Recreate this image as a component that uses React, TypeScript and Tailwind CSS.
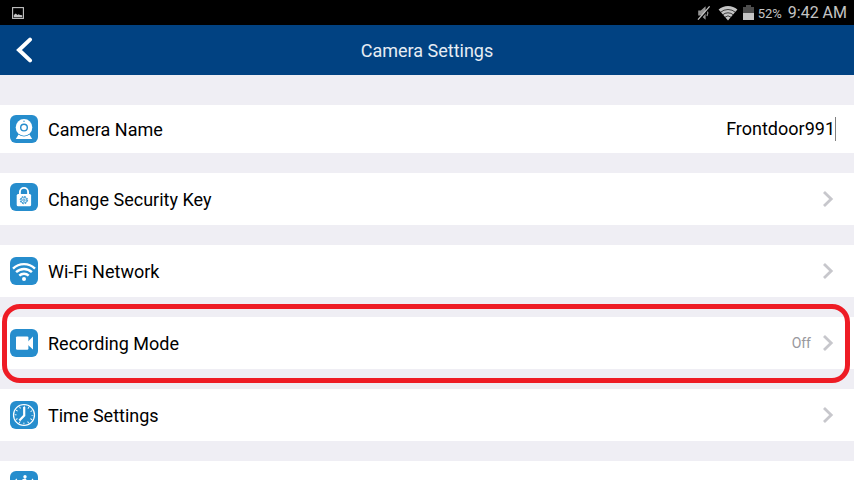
import type { ReactNode } from "react";
import clsx from "clsx";

function IconTile({ children, className }: { children: ReactNode; className?: string }) {
    return (
        <svg viewBox="0 0 28 28" className={clsx("h-7 w-7 shrink-0 rounded-md bg-[#268dcd]", className)} fill="none" aria-hidden="true">
            {children}
        </svg>
    );
}

function WebcamIcon() {
    return (
        <IconTile>
            <path d="M8.5 19.5h11l2.7 4.5H5.8z" fill="#fff" />
            <circle cx="14" cy="12.4" r="9" fill="#268dcd" />
            <circle cx="14" cy="12.4" r="8.3" fill="#fff" />
            <circle cx="14" cy="12.6" r="3.3" stroke="#268dcd" strokeWidth="1.4" />
            <circle cx="14" cy="6.2" r="0.7" fill="#268dcd" />
        </IconTile>
    );
}

function LockIcon() {
    return (
        <IconTile className="mt-[10px] self-start">
            <path d="M9.9 12V9a4.1 4.1 0 0 1 8.2 0v3" stroke="#fff" strokeWidth="1.9" />
            <rect x="6.7" y="11" width="14.4" height="12.3" rx="1.5" fill="#fff" />
            <circle cx="13.9" cy="17.1" r="3.7" stroke="#268dcd" strokeWidth="1" strokeDasharray="1.6 1.3" />
            <circle cx="13.9" cy="17.1" r="2.9" stroke="#268dcd" strokeWidth="0.8" />
            <circle cx="13.9" cy="17.1" r="1.2" stroke="#268dcd" strokeWidth="0.9" />
        </IconTile>
    );
}

function WifiIcon() {
    return (
        <IconTile>
            <g stroke="#fff" strokeWidth="2.4">
                <path d="M3 11.6a15.8 15.8 0 0 1 22 0" />
                <path d="M6.1 15.2a11.4 11.4 0 0 1 15.8 0" />
                <path d="M9.3 18.7a6.8 6.8 0 0 1 9.4 0" />
            </g>
            <circle cx="14" cy="21.9" r="2" fill="#fff" />
        </IconTile>
    );
}

function VideoIcon() {
    return (
        <IconTile>
            <rect x="6" y="7.4" width="12.4" height="13.4" rx="1.2" fill="#fff" />
            <path d="M18 12.4 23 7.6v13l-5-4.6z" fill="#fff" />
        </IconTile>
    );
}

function ClockIcon() {
    return (
        <IconTile>
            <circle cx="14" cy="14" r="10.5" stroke="#fff" strokeWidth="1.2" />
            <circle cx="14" cy="14" r="8.4" stroke="#fff" strokeWidth="2" strokeDasharray="0.9 3.498" strokeDashoffset="0.45" />
            <path d="M14.2 6v8.6l-4.8 5" stroke="#fff" strokeWidth="2.2" />
        </IconTile>
    );
}

function MotionIcon() {
    return (
        <IconTile className="mt-[10px] self-start">
            <circle cx="15" cy="5.7" r="1.7" fill="#fff" />
            <path d="M12.4 9.2 15 8.2l2 2.4M14.4 8.8l-1 6 3 3.2M13.4 15l-2.8 5" stroke="#fff" strokeWidth="1.7" />
            <path d="M6.8 8a9.2 9.2 0 0 0 0 12.6M22 8a9.2 9.2 0 0 1 0 12.6" stroke="#fff" strokeWidth="1.2" />
        </IconTile>
    );
}

function Chevron() {
    return (
        <svg viewBox="0 0 12 18" className="h-[18px] w-3 shrink-0" fill="none" stroke="#c7c7cc" strokeWidth="2.8" aria-hidden="true">
            <path d="M2 2l7.2 7L2 16" />
        </svg>
    );
}

const rows = [
    { id: "security", label: "Change Security Key", icon: <LockIcon /> },
    { id: "wifi", label: "Wi-Fi Network", icon: <WifiIcon /> },
    { id: "recording", label: "Recording Mode", icon: <VideoIcon />, value: "Off", highlighted: true },
    { id: "time", label: "Time Settings", icon: <ClockIcon /> },
    { id: "motion", label: "", icon: <MotionIcon /> },
];

function StatusBar() {
    return (
        <div className="flex h-[25px] shrink-0 items-center bg-black pr-[7px] pl-3 text-[#c4c4c4]">
            <svg viewBox="0 0 12 12" className="mt-px h-3 w-3" fill="none" aria-hidden="true">
                <rect x="0.6" y="0.6" width="10.8" height="10.8" stroke="currentColor" strokeWidth="1.1" />
                <path d="M1.8 10.2V8l2-1.6L5.4 8l1.2-.8 1.4.8 2.2.2v2z" fill="currentColor" />
            </svg>
            <div className="ml-auto flex items-center">
                <svg viewBox="0 0 14 16" className="mr-[7px] h-4 w-[14px]" fill="none" aria-hidden="true">
                    <path d="M1.2 5.5h2.6L8.6 1.3v13.4L3.8 10.5H1.2z" fill="#959595" />
                    <path d="M10 5q1.6 3 0 6" stroke="#959595" strokeWidth="1.3" />
                    <path d="M2 15.4 13.4 2.2" stroke="#000" strokeWidth="1.4" />
                    <path d="M1 14.6 12.6 1.4" stroke="currentColor" strokeWidth="1.3" />
                </svg>
                <svg viewBox="0 0 20 16" className="mr-[5px] h-4 w-5" fill="none" aria-hidden="true">
                    <path d="M.6 4.6a14 14 0 0 1 18.8 0L10 15.6z" fill="currentColor" />
                    <path d="M2.4 7.4a11.4 11.4 0 0 1 15.2 0M4.6 9.9a8 8 0 0 1 10.8 0M6.8 12.3a4.7 4.7 0 0 1 6.4 0" stroke="#000" strokeWidth="0.7" />
                </svg>
                <svg viewBox="0 0 11 16" className="mr-1 h-4 w-[11px]" aria-hidden="true">
                    <path d="M3 0h5v2h3v6H0V2h3z" fill="#4d4d4d" />
                    <path d="M0 8h11v7H0z" fill="currentColor" />
                </svg>
                <span className="mt-[2px] mr-[6px] text-[13px] leading-4">52%</span>
                <span className="text-base leading-5">9:42 AM</span>
            </div>
        </div>
    );
}

export default function App() {
    return (
        <div className="flex h-screen flex-col overflow-hidden bg-[#efeef4] font-['Roboto',sans-serif] text-black">
            <StatusBar />
            <header className="grid h-[50px] shrink-0 grid-cols-[48px_1fr_48px] items-center bg-[#014282] text-white">
                <button type="button" aria-label="Back" className="flex h-full items-center justify-center">
                    <svg viewBox="0 0 18 26" className="h-[26px] w-[18px]" fill="none" stroke="currentColor" strokeWidth="4" strokeLinecap="round" aria-hidden="true">
                        <path d="M15 2.6 4 13l11 10.4" />
                    </svg>
                </button>
                <h1 className="pt-[2px] text-center text-lg leading-6 text-[#e6edf4]">Camera Settings</h1>
            </header>

            <main className="flex flex-col gap-5 pt-[30px]">
                <div className="flex h-12 shrink-0 items-center bg-white pr-[18px] pl-[10px]">
                    <WebcamIcon />
                    <label htmlFor="camera-name" className="ml-[10px] shrink-0 pt-[2px] text-lg leading-6">
                        Camera Name
                    </label>
                    <input
                        id="camera-name"
                        type="text"
                        defaultValue="Frontdoor991"
                        className="h-6 min-w-0 flex-1 border-r border-[#808080] text-right text-lg leading-6 outline-none"
                    />
                </div>

                {rows.map((row) => (
                    <div key={row.id} className="relative shrink-0">
                        <button
                            type="button"
                            aria-label={row.label ? undefined : "More settings"}
                            className="flex h-[52px] w-full items-center bg-white pr-5 pl-[10px] text-left"
                        >
                            {row.icon}
                            <span className="ml-[10px] flex-1 pt-[2px] text-lg leading-6">{row.label}</span>
                            {row.value && <span className="mr-[11px] text-sm leading-5 text-[#98989d]">{row.value}</span>}
                            {row.label && <Chevron />}
                        </button>
                        {row.highlighted && (
                            <div className="pointer-events-none absolute -top-[13px] right-1 -bottom-[14px] left-[2px] z-10 rounded-[18px] border-5 border-[#ee1c25]" />
                        )}
                    </div>
                ))}
            </main>
        </div>
    );
}
